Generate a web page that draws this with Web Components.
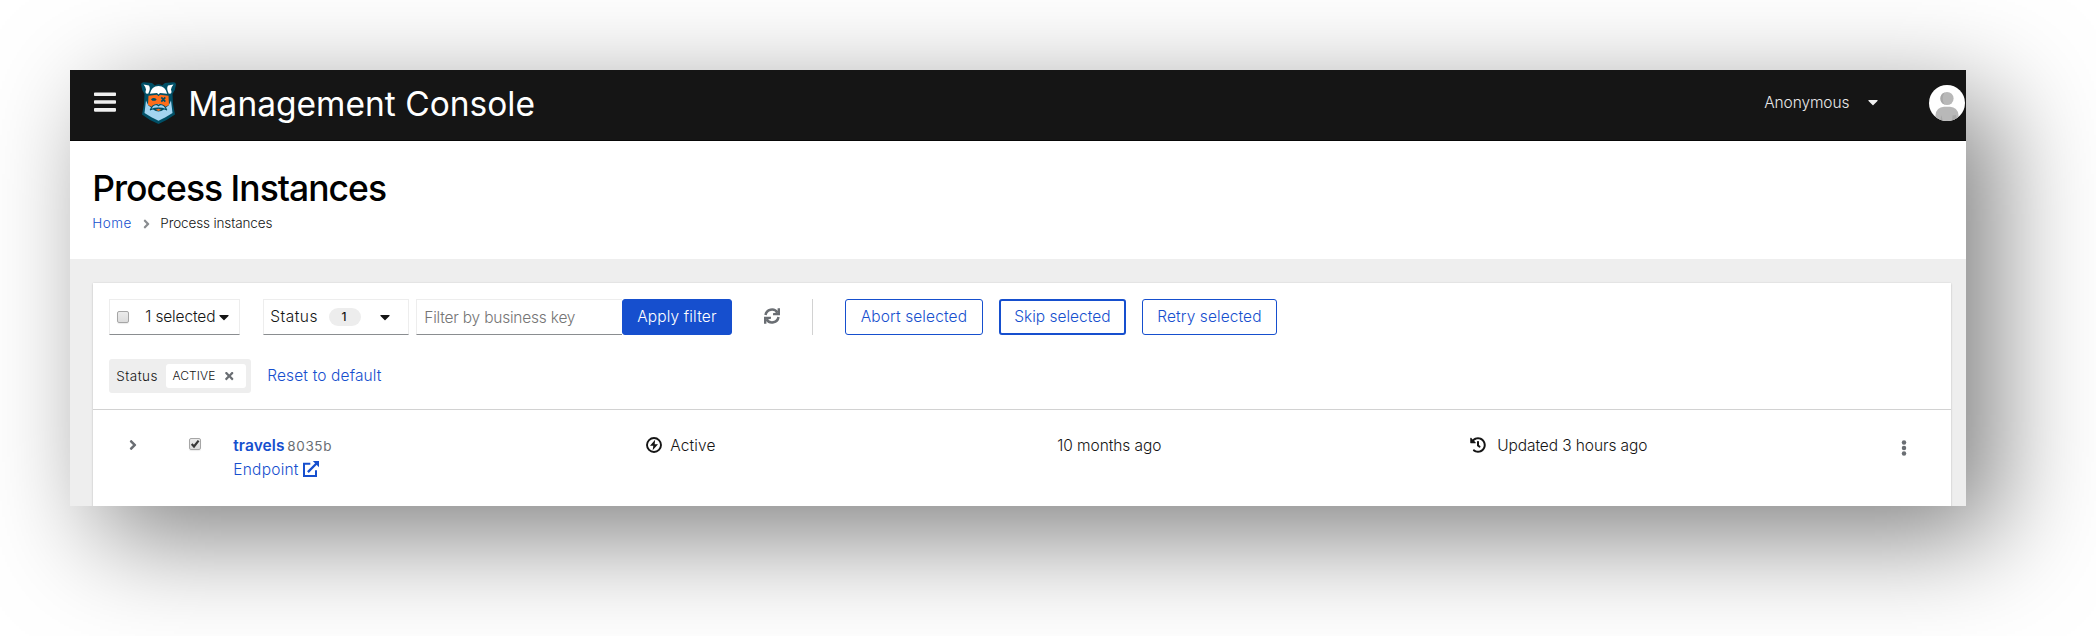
<!DOCTYPE html>
<html lang="en">
<head>
<meta charset="utf-8">
<title>Management Console</title>
<style>
  html, body { margin: 0; background: #fff; }
  body { height: 636px; overflow: hidden; font-family: Inter, "Noto Sans", sans-serif; color: #151515; }
</style>
</head>
<body>
<mc-window>
  <mc-header slot="header"></mc-header>
  <mc-page-title slot="title"></mc-page-title>
  <mc-card>
    <mc-toolbar></mc-toolbar>
    <mc-chips></mc-chips>
    <mc-row></mc-row>
  </mc-card>
</mc-window>

<script>
const define = (name, html, ready) => {
  const template = document.createElement('template');
  template.innerHTML = html;
  customElements.define(name, class extends HTMLElement {
    constructor() {
      super();
      this.attachShadow({ mode: 'open' }).append(template.content.cloneNode(true));
    }
    connectedCallback() { if (ready) ready.call(this, this.shadowRoot); }
  });
};

/* Single-line label whose tracking is adjusted so that its ink fills the width "w". */
define('mc-text', `<style>
  :host { display: block; flex: none; white-space: nowrap; line-height: 24px; }
  span { display: inline-block; margin-left: -.05em; }
</style><span><slot></slot></span>`, function (root) {
  const w = +this.getAttribute('w');
  const size = +(this.getAttribute('size') || 15.5);
  this.style.fontSize = size + 'px';
  this.style.fontWeight = this.getAttribute('weight') || 300;
  const span = root.querySelector('span');
  const n = this.textContent.length;
  span.style.letterSpacing = '0px';
  span.style.letterSpacing = ((w + size * .08 - span.getBoundingClientRect().width) / Math.max(1, n - 1)) + 'px';
  this.style.width = w + 'px';
});

const ICONS = {
  bars: ['0 0 448 512', '<path d="M16 132h416c8.8 0 16-7.2 16-16V76c0-8.8-7.2-16-16-16H16C7.2 60 0 67.2 0 76v40c0 8.8 7.2 16 16 16zm0 160h416c8.8 0 16-7.2 16-16v-40c0-8.8-7.2-16-16-16H16c-8.8 0-16 7.2-16 16v40c0 8.800 7.200 16 16 16zm0 160h416c8.800 0 16-7.200 16-16v-40c0-8.800-7.200-16-16-16H16c-8.800 0-16 7.200-16 16v40c0 8.800 7.200 16 16 16z"/>'],
  caret: ['0 0 320 512', '<path d="M31.3 192h257.3c17.8 0 26.7 21.5 14.1 34.1L174.1 354.8c-7.8 7.8-20.5 7.8-28.3 0L17.2 226.1C4.6 213.5 13.5 192 31.3 192z"/>'],
  angle: ['0 0 256 512', '<path d="M224.3 273l-136 136c-9.4 9.4-24.6 9.4-33.9 0l-22.6-22.6c-9.4-9.4-9.4-24.6 0-33.9l96.4-96.4-96.4-96.4c-9.4-9.4-9.4-24.6 0-33.9L54.300 103c9.400-9.400 24.600-9.400 33.900 0l136 136c9.500 9.400 9.500 24.600.1 34z"/>'],
  times: ['0 0 352 512', '<path d="M242.72 256l100.07-100.07c12.28-12.28 12.28-32.19 0-44.48l-22.24-22.24c-12.28-12.28-32.19-12.28-44.48 0L176 189.28 75.93 89.21c-12.28-12.28-32.19-12.28-44.48 0L9.21 111.45c-12.28 12.28-12.28 32.19 0 44.48L109.28 256 9.21 356.07c-12.28 12.28-12.28 32.19 0 44.48l22.24 22.24c12.28 12.28 32.2 12.28 44.48 0L176 322.72l100.07 100.07c12.28 12.28 32.2 12.28 44.48 0l22.24-22.24c12.28-12.28 12.28-32.19 0-44.48L242.72 256z"/>'],
  kebab: ['0 0 192 512', '<circle cx="96" cy="80" r="72"/><circle cx="96" cy="256" r="72"/><circle cx="96" cy="432" r="72"/>'],
  history: ['0 0 512 512', '<path d="M504 255.531c.253 136.64-111.18 248.372-247.82 248.468-59.015.042-113.223-20.53-155.822-54.911-11.077-8.94-11.905-25.541-1.839-35.607l11.267-11.267c8.609-8.609 22.353-9.551 31.891-1.984C173.062 425.135 212.781 440 256 440c101.705 0 184-82.311 184-184 0-101.705-82.311-184-184-184-48.814 0-93.149 18.969-126.068 49.932l50.754 50.754c10.08 10.08 2.941 27.314-11.313 27.314H24c-8.837 0-16-7.163-16-16V38.627c0-14.254 17.234-21.393 27.314-11.314l49.372 49.372C129.209 34.136 189.552 8 256 8c136.81 0 247.747 110.78 248 247.531zm-180.912 78.784l9.823-12.63c8.138-10.463 6.253-25.542-4.21-33.679L288 256.349V152c0-13.255-10.745-24-24-24h-16c-13.255 0-24 10.745-24 24v135.651l65.409 50.874c10.463 8.137 25.541 6.253 33.679-4.21z"/>'],
  sync: ['0 0 16 16', '<path fill="none" stroke="currentColor" stroke-width="2.500" d="M1.500 7A6.500 6.300 0 0 1 13.400 4.500M14.500 9A6.500 6.300 0 0 1 2.600 11.500"/><path d="M16 .2v7H9V5.300L13.600 4.300V.2zM0 15.800V8.800h7v1.900L2.400 11.700v4.100z"/>'],
  running: ['0 0 16 16', '<circle cx="8" cy="8" r="7" fill="none" stroke="currentColor" stroke-width="1.900"/><path d="M9.100 2.800L4 8.700h3.300L6.700 13.200 12 7.300H8.700z"/>'],
  external: ['0 0 16 16', '<path fill="none" stroke="currentColor" stroke-width="2" d="M7.300 2.800H1V15h12V9.200"/><path fill="none" stroke="currentColor" stroke-width="2.300" d="M4.900 11.100L13.700 2.300"/><path d="M9.800 0H16v6.200z"/>'],
  logo: ['0 0 35 42', `
    <path fill="#004f66" d="M0 2Q1 0 3 .2L11 1 14 3.500Q17.500 1 21 3.500L24 1 32 .2Q35 0 35 2.500Q34.500 8 31.500 12L32 22 34 32.500 25.500 38 17.500 42 9 38 1 32.500 3 22 3.500 12Q.5 8 0 2z"/>
    <path fill="#fff" d="M2.500 2.400L8 3.500Q10 6.500 7.200 11.800L5 11.500Q4 10 5 7.500Q4.800 5 2.500 2.400zM32.500 2.400L27 3.500Q25 6.500 27.800 11.800L30 11.500Q31 10 30 7.500Q30.200 5 32.500 2.400z"/>
    <path fill="#fff" d="M8.800 11.700Q10.500 4 17.500 3.900Q24.500 4 26.200 11.700L19 10.900 17.500 12.500 16 10.900z"/>
    <path fill="#ff6d1a" d="M7.500 13.700L16 12.700 17.500 14.200 19 12.700 27.500 13.700 28 23 24 25 17.500 22 11 25 7 23z"/>
    <path fill="#004f66" d="M10 17.200Q13 14.800 15.700 17.500L14.300 18.700H11.300z"/>
    <path stroke="#004f66" stroke-width="1.700" d="M20.300 15.400l4 4.200m0-4.200l-4 4.200"/>
    <path fill="#a3d4f0" d="M5 18.500L7.300 23.500 10.500 25.700 9.500 28.300 12 27.600Q17.500 31.300 23 27.600L25.500 28.300 24.500 25.700 27.700 23.500 30 18.500 31.500 31 24.500 35.300 17.500 38.700 10.500 35.300 3.500 31z"/>
    <path fill="#a3d4f0" d="M10.400 26.800Q12 22.500 17.500 22.300Q23 22.500 24.600 26.800Q21.500 25.400 17.500 25.500Q13.500 25.400 10.400 26.800z"/>
    <path fill="#ff6d1a" d="M14.700 27.700L17.500 26.700 20.300 27.700 17.500 28.900z"/>
    <path fill="none" stroke="#004f66" stroke-width="1.200" d="M9.200 28.300Q11.300 22.400 16 22.500L17.500 23.700 19 22.500Q23.700 22.400 25.800 28.300"/>`],
  avatar: ['0 0 36 36', `
    <clipPath id="c"><circle cx="18" cy="18" r="18"/></clipPath>
    <g clip-path="url(#c)"><path fill="#fff" d="M0 0h36v36H0z"/>
    <circle cx="18" cy="13.500" r="6.600" fill="#b8b8b8"/><path fill="#a8a8a8" d="M15.500 7.400a6.600 6.600 0 0 0 0 12.200q-3.500-6 0-12.200z"/>
    <path fill="#b8b8b8" d="M6.500 37V30Q7.500 22 15 21.700h6Q28.500 22 29.500 30v7z"/>
    <path fill="#a8a8a8" d="M11 36l1.600-6 1 6zM23 36l.5-5.500L27 30l1 6z"/></g>`]
};
define('mc-icon', `<style>:host{display:block;flex:none} svg{display:block;width:100%;height:100%;fill:currentColor}</style><svg></svg>`, function (root) {
  const [box, shapes] = ICONS[this.getAttribute('name')];
  const svg = root.querySelector('svg');
  svg.setAttribute('viewBox', box);
  svg.innerHTML = shapes;
  this.style.width = this.getAttribute('w') + 'px';
  this.style.height = this.getAttribute('h') + 'px';
});

define('mc-check', `<style>
  :host { display: block; flex: none; box-sizing: border-box; width: 12px; height: 12px; border: 1px solid #a6a6a6; border-radius: 2px;
    background: linear-gradient(#ebebeb, #dcdcdc); box-shadow: 0 1px 1px rgba(0,0,0,.08); }
  svg { display: none; width: 10px; height: 10px; }
  :host([checked]) svg { display: block; }
</style><svg viewBox="0 0 10 10"><path d="M1.700 5L4 7.500 8.600 1.600" fill="none" stroke="#383838" stroke-width="2.200"/></svg>`);

define('mc-button', `<style>
  :host { display: flex; flex: none; box-sizing: border-box; height: 36px; align-items: center; justify-content: center;
    border-radius: 3px; border: 1px solid #164fce; color: #164fce; }
  :host([primary]) { background: #164fce; color: #fff; }
  :host([focused]) { border-width: 2px; }
</style><slot></slot>`, function () { this.style.width = this.getAttribute('w') + 'px'; });

define('mc-field', `<style>
  :host { display: flex; flex: none; box-sizing: border-box; height: 36px; align-items: center;
    border: 1px solid #ededed; border-bottom-color: #8a8d90; background: #fff; }
</style><slot></slot>`, function () { this.style.width = this.getAttribute('w') + 'px'; });

define('mc-window', `<style>
  :host { display: flex; flex-direction: column; width: 1896px; height: 436px; margin: 70px; box-shadow: 30px 30px 100px rgba(0,0,0,.5); }
  main { flex: 1; min-height: 0; overflow: hidden; background: #eee; padding: 24px 15px 0 23px; }
</style><slot name="header"></slot><slot name="title"></slot><main><slot></slot></main>`);

define('mc-header', `<style>
  :host { display: flex; flex: none; box-sizing: border-box; height: 71px; padding: 0 1px 0 24px; background: #151515; border-bottom: 1px solid #080808; color: #fff; }
  .menu { margin-top: 19px; color: #f0f0f0; }
  .logo { margin: 12px 0 0 25px; }
  .title { margin: 13px 0 0 14px; line-height: 42px; }
  .user { margin: 21px 0 0 auto; color: #e8e8e8; }
  .caret { margin: 24px 0 0 19px; color: #f0f0f0; }
  .avatar { margin: 15px 0 0 51px; }
</style>
<mc-icon class="menu" name="bars" w="22" h="26"></mc-icon>
<mc-icon class="logo" name="logo" w="35" h="42"></mc-icon>
<mc-text class="title" w="344" size="33.5" weight="400">Management Console</mc-text>
<mc-text class="user" w="84">Anonymous</mc-text>
<mc-icon class="caret" name="caret" w="10" h="16"></mc-icon>
<mc-icon class="avatar" name="avatar" w="36" h="36"></mc-icon>`);

define('mc-page-title', `<style>
  :host { display: block; flex: none; box-sizing: border-box; height: 118px; padding: 27px 23px 0; background: #fff; }
  .h { line-height: 42px; color: #000; margin-left: 1px; }
  nav { display: flex; align-items: center; height: 24px; margin-top: 1px; }
  .home { color: #164fce; }
  .sep { margin: 1px 11px 0 12px; color: #8a8d90; }
</style>
<mc-text class="h" w="292" size="35.500" weight="500">Process Instances</mc-text>
<nav><mc-text class="home" w="38" size="13.500">Home</mc-text><mc-icon class="sep" name="angle" w="7" h="14"></mc-icon><mc-text w="111" size="13.500">Process instances</mc-text></nav>`);

define('mc-card', `<style>
  :host { display: block; height: 320px; background: #fff; box-shadow: 0 1px 2px rgba(3,3,3,.12), 0 0 2px rgba(3,3,3,.1); }
</style><slot></slot>`);

define('mc-toolbar', `<style>
  :host { display: flex; padding: 16px 16px 0; }
  .bulk { padding-left: 7px; }
  .bulk mc-text { margin: 0 4px 0 17px; }
  .status { margin-left: 23px; padding-left: 7px; }
  .badge { display: flex; align-items: center; justify-content: center; width: 32px; height: 18px; border-radius: 9px; background: #ededed; margin: 0 19px 0 12px; }
  .filter { margin-left: 7px; padding: 2px 0 0 8px; border-right: 0; color: #757575; }
  .sync { margin: 9px 32px 0 32px; color: #6a6e73; }
  .line { width: 1px; height: 36px; background: #d2d2d2; margin-right: 32px; }
  .b { margin-right: 16px; }
</style>
<mc-field class="bulk" w="131"><mc-check></mc-check><mc-text w="69">1 selected</mc-text><mc-icon name="caret" w="10" h="16"></mc-icon></mc-field>
<mc-field class="status" w="146"><mc-text w="46">Status</mc-text><span class="badge"><mc-text w="6" size="12" weight="500">1</mc-text></span><mc-icon name="caret" w="10" h="16"></mc-icon></mc-field>
<mc-field class="filter" w="206"><mc-text w="150">Filter by business key</mc-text></mc-field>
<mc-button primary w="110"><mc-text w="78">Apply filter</mc-text></mc-button>
<mc-icon class="sync" name="sync" w="16" h="16"></mc-icon><span class="line"></span>
<mc-button class="b" w="138"><mc-text w="105">Abort selected</mc-text></mc-button>
<mc-button class="b" focused w="127"><mc-text w="95">Skip selected</mc-text></mc-button>
<mc-button w="135"><mc-text w="103">Retry selected</mc-text></mc-button>`);

define('mc-chips', `<style>
  :host { display: flex; box-sizing: border-box; height: 75px; padding: 24px 16px 0; border-bottom: 1px solid #d2d2d2; }
  .group { display: flex; box-sizing: border-box; align-items: center; width: 142px; height: 34px; padding: 0 5px 0 8px; border-radius: 3px; background: #eee; }
  .chip { display: flex; box-sizing: border-box; align-items: center; width: 80px; height: 24px; margin-left: 9px; padding-left: 7px; border-radius: 3px; background: #fff; }
  .x { margin-left: 10px; color: #6a6e73; }
  .reset { margin: 5px 0 0 17px; color: #164fce; }
</style>
<span class="group"><mc-text w="40" size="13.500">Status</mc-text><span class="chip"><mc-text w="42" size="12">ACTIVE</mc-text><mc-icon class="x" name="times" w="8.500" h="12"></mc-icon></span></span>
<mc-text class="reset" w="113">Reset to default</mc-text>`);

define('mc-row', `<style>
  :host { display: grid; grid-template-columns: 96px 45px 412px 412px 412px 412px 1fr; padding-top: 24px; align-items: start; }
  .toggle { margin: 3px 0 0 36px; color: #6a6e73; }
  mc-check { margin-top: 4px; }
  .line { display: flex; align-items: center; }
  .line mc-icon { margin-bottom: 2px; }
  .name, .link { color: #164fce; }
  .id { color: #6a6e73; margin-left: 4px; }
  .kebab { color: #6a6e73; margin: 6px 0 0 19px; }
</style>
<mc-icon class="toggle" name="angle" w="8" h="16"></mc-icon>
<mc-check checked></mc-check>
<div>
  <div class="line"><mc-text class="name" w="50" size="15.500" weight="600">travels</mc-text><mc-text class="id" w="43" size="13.500" weight="400">8035b</mc-text></div>
  <div class="line link"><mc-text w="64">Endpoint</mc-text><mc-icon name="external" w="16" h="16" style="margin-left:5px"></mc-icon></div>
</div>
<div class="line"><mc-icon name="running" w="16" h="16"></mc-icon><mc-text w="44" style="margin-left:9px">Active</mc-text></div>
<div class="line"><mc-text w="103">10 months ago</mc-text></div>
<div class="line"><mc-icon name="history" w="16" h="16"></mc-icon><mc-text w="149" style="margin-left:12px">Updated 3 hours ago</mc-text></div>
<mc-icon class="kebab" name="kebab" w="6" h="16"></mc-icon>`);
</script>
</body>
</html>
